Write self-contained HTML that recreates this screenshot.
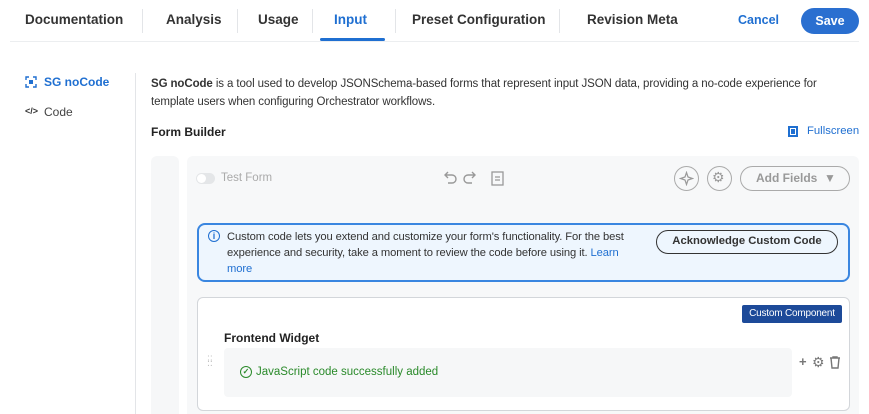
<!DOCTYPE html>
<html><head><style>
*{box-sizing:border-box;margin:0;padding:0}
body{width:869px;height:414px;overflow:hidden;background:#fff;font-family:"Liberation Sans",sans-serif;color:#222;position:relative}
.a{position:absolute;white-space:nowrap}
.tab{position:absolute;top:12px;font-size:13.5px;font-weight:bold;color:#333}
.sep{position:absolute;top:9px;width:1px;height:24px;background:#e3e5e8}
</style></head><body>
<div class="tab" style="left:25px">Documentation</div>
<div class="sep" style="left:142px"></div>
<div class="tab" style="left:166px">Analysis</div>
<div class="sep" style="left:237px"></div>
<div class="tab" style="left:258px">Usage</div>
<div class="sep" style="left:312px"></div>
<div class="tab" style="left:334px;color:#1f6fd1">Input</div>
<div class="a" style="left:320px;top:38px;width:65px;height:3px;background:#1f6fd1;border-radius:2px"></div>
<div class="sep" style="left:395px"></div>
<div class="tab" style="left:412px">Preset Configuration</div>
<div class="sep" style="left:559px"></div>
<div class="tab" style="left:587px">Revision Meta</div>
<div class="a" style="left:738px;top:13px;font-size:12.5px;font-weight:bold;color:#1f6fd1">Cancel</div>
<div class="a" style="left:801px;top:8px;width:58px;height:26px;border-radius:13px;background:#2a6fd0;color:#fff;font-weight:bold;font-size:12.5px;text-align:center;line-height:26px">Save</div>
<div class="a" style="left:10px;top:41px;width:849px;height:1px;background:#eceef0"></div>

<svg class="a" style="left:25px;top:76px" width="12" height="12" viewBox="0 0 12 12" fill="none" stroke="#1f6fd1" stroke-width="1.4"><path d="M1 4V1h3M8 1h3v3M11 8v3H8M4 11H1V8"/><rect x="4" y="4" width="4" height="4" fill="#1f6fd1" stroke="none"/></svg>
<div class="a" style="left:44px;top:75px;font-size:12px;font-weight:bold;color:#1f6fd1">SG noCode</div>
<div class="a" style="left:25px;top:106px;font-size:9px;font-weight:bold;color:#333">&lt;/&gt;</div>
<div class="a" style="left:44px;top:105px;font-size:12px;color:#444">Code</div>
<div class="a" style="left:135px;top:73px;width:1px;height:341px;background:#e3e5e8"></div>

<div class="a" style="left:151px;top:75px;font-size:11.5px;letter-spacing:-0.1px;color:#333;line-height:18px">
<b>SG noCode</b> is a tool used to develop JSONSchema-based forms that represent input JSON data, providing a no-code experience for<br>template users when configuring Orchestrator workflows.</div>
<div class="a" style="left:151px;top:125px;font-size:12px;font-weight:bold;color:#222">Form Builder</div>
<div class="a" style="left:788px;top:126px;width:10px;height:11px;border:2px solid #1f6fd1;background:#1f6fd1;box-shadow:inset 0 0 0 1px #fff"></div>
<div class="a" style="left:807px;top:125px;font-size:11.3px;color:#1f6fd1">Fullscreen</div>

<div class="a" style="left:151px;top:156px;width:28px;height:258px;background:#f6f7f8;border-radius:6px 6px 0 0"></div>
<div class="a" style="left:187px;top:156px;width:672px;height:258px;background:#f7f8f9;border-radius:6px 6px 0 0"></div>

<div class="a" style="left:196px;top:173px;width:19px;height:11px;border-radius:6px;background:#e4e6e8"></div>
<div class="a" style="left:197px;top:174px;width:9px;height:9px;border-radius:50%;background:#fff"></div>
<div class="a" style="left:221px;top:172px;font-size:11.5px;color:#aaa">Test Form</div>
<svg class="a" style="left:442px;top:170px" width="36" height="16" viewBox="0 0 36 16" fill="none" stroke="#999" stroke-width="1.4"><path d="M4 5h6a4 4 0 010 8H6M6 2L3 5l3 3"/><path d="M32 5h-6a4 4 0 000 8h4M30 2l3 3-3 3"/></svg>
<svg class="a" style="left:491px;top:171px" width="13" height="15" viewBox="0 0 13 15" fill="none" stroke="#999" stroke-width="1.3"><rect x="1" y="1" width="11" height="13"/><path d="M4 6h5M4 9h5"/></svg>
<div class="a" style="left:674px;top:166px;width:25px;height:25px;border:1.5px solid #aaa;border-radius:50%"></div>
<svg class="a" style="left:679px;top:171px" width="15" height="15" viewBox="0 0 15 15" fill="none" stroke="#999" stroke-width="1.2"><path d="M7.5 1.5L9 6l4.5 1.5L9 9l-1.5 4.5L6 9 1.5 7.5 6 6z"/></svg>
<div class="a" style="left:707px;top:166px;width:25px;height:25px;border:1.5px solid #aaa;border-radius:50%"></div>
<div class="a" style="left:712px;top:169px;font-size:14px;color:#999">⚙</div>
<div class="a" style="left:740px;top:166px;width:110px;height:25px;border:1.5px solid #aaa;border-radius:13px;font-size:12px;font-weight:bold;color:#999;line-height:22px;padding-left:15px">Add Fields &nbsp;▼</div>

<div class="a" style="left:197px;top:223px;width:653px;height:59px;border:2px solid #3a86e0;border-radius:8px;background:#eef6fe"></div>
<div class="a" style="left:208px;top:230px;width:12px;height:12px;border:1.3px solid #1f6fd1;border-radius:50%;font-size:9px;color:#1f6fd1;text-align:center;line-height:10px;font-weight:bold">i</div>
<div class="a" style="left:227px;top:229px;font-size:11.2px;letter-spacing:-0.1px;line-height:16px;color:#333">Custom code lets you extend and customize your form's functionality. For the best<br>experience and security, take a moment to review the code before using it. <span style="color:#1f6fd1">Learn</span><br><span style="color:#1f6fd1">more</span></div>
<div class="a" style="left:656px;top:230px;width:182px;height:24px;border:1.5px solid #333;border-radius:12px;font-size:11.3px;font-weight:bold;color:#333;text-align:center;line-height:21px">Acknowledge Custom Code</div>

<div class="a" style="left:197px;top:297px;width:653px;height:114px;border:1px solid #d3d6da;border-radius:6px;background:#fff"></div>
<div class="a" style="left:742px;top:305px;width:100px;height:18px;background:#1d4a99;border-radius:2px;color:#fff;font-size:10px;text-align:center;line-height:18px;letter-spacing:-0.2px">Custom Component</div>
<div class="a" style="left:224px;top:331px;font-size:12px;font-weight:bold;color:#222">Frontend Widget</div>
<div class="a" style="left:224px;top:348px;width:568px;height:49px;background:#f6f7f8;border-radius:4px"></div>
<div class="a" style="left:207px;top:357px;font-size:9px;color:#bbb;line-height:4px">⁚⁚<br>⁚⁚</div>
<div class="a" style="left:240px;top:366px;width:12px;height:12px;border:1.5px solid #2a8a2a;border-radius:50%;font-size:8px;color:#2a8a2a;text-align:center;line-height:9px;font-weight:bold">✓</div>
<div class="a" style="left:256px;top:366px;font-size:11.5px;color:#2a8a2a">JavaScript code successfully added</div>
<div class="a" style="left:799px;top:354px;font-size:13px;font-weight:bold;color:#777">+</div>
<div class="a" style="left:812px;top:354px;font-size:14px;color:#777">⚙</div>
<svg class="a" style="left:829px;top:356px" width="12" height="13" viewBox="0 0 12 13" fill="none" stroke="#777" stroke-width="1.4"><path d="M1 2h10M4 2V1h4v1M2 2l1 10h6l1-10"/></svg>
</body></html>
